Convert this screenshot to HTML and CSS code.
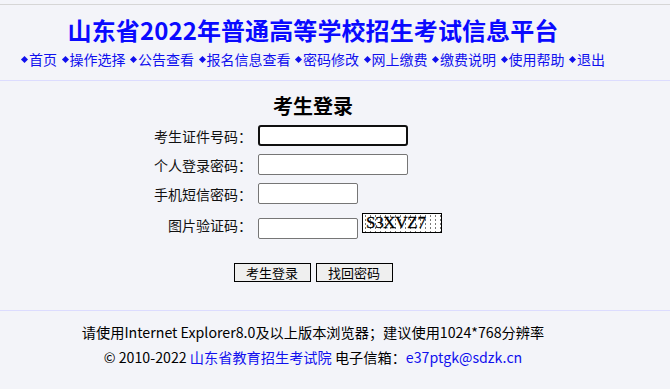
FILE: index.html
```html
<!DOCTYPE html>
<html lang="zh-CN">
<head>
<meta charset="utf-8">
<title>山东省2022年普通高等学校招生考试信息平台</title>
<link rel="stylesheet" href="styles.css">
</head>
<body>
<div class="page">
  <header class="header">
    <h1 class="title">山东省2022年普通高等学校招生考试信息平台</h1>
    <nav class="nav">
      <a href="#"><i class="dot"></i>首页</a>
      <a href="#"><i class="dot"></i>操作选择</a>
      <a href="#"><i class="dot"></i>公告查看</a>
      <a href="#"><i class="dot"></i>报名信息查看</a>
      <a href="#"><i class="dot"></i>密码修改</a>
      <a href="#"><i class="dot"></i>网上缴费</a>
      <a href="#"><i class="dot"></i>缴费说明</a>
      <a href="#"><i class="dot"></i>使用帮助</a>
      <a href="#"><i class="dot"></i>退出</a>
    </nav>
  </header>
  <main class="login">
    <h2 class="login-title">考生登录</h2>
    <div class="form">
      <label class="lbl r1">考生证件号码：</label>
      <div class="field r1"><input class="inp wide focus" type="text"></div>
      <label class="lbl r2">个人登录密码：</label>
      <div class="field r2"><input class="inp wide" type="password"></div>
      <label class="lbl r3">手机短信密码：</label>
      <div class="field r3"><input class="inp narrow" type="password"></div>
      <label class="lbl r4">图片验证码：</label>
      <div class="field r4"><input class="inp narrow" type="text"><span class="captcha">S3XVZ7</span></div>
    </div>
    <div class="buttons">
      <button class="btn" type="button">考生登录</button>
      <button class="btn" type="button">找回密码</button>
    </div>
  </main>
  <footer class="footer">
    <p class="f1">请使用Internet Explorer8.0及以上版本浏览器；建议使用1024*768分辨率</p>
    <p class="f2">© 2010-2022 <a href="#">山东省教育招生考试院</a> 电子信箱：<a href="#">e37ptgk@sdzk.cn</a></p>
  </footer>
</div>
</body>
</html>
```
FILE: styles.css
```css
html, body {
  margin: 0;
  padding: 0;
  background: #f3f4f9;
}
body {
  font-family: "Noto Sans CJK SC", "Noto Sans", sans-serif;
  color: #000;
}
.page {
  padding-top: 4px;
  width: 670px;
}
.header {
  border-top: 1px solid #d6d6d6;
  border-bottom: 1px solid #dcdcff;
  padding: 9px 0 12px;
  width: 670px;
}
.title {
  width: 626px;
  margin: 0;
  text-align: center;
  font-size: 24px;
  line-height: 32px;
  font-weight: bold;
  color: #0a0aff;
  letter-spacing: 0.1px;
}
.nav {
  width: 626px;
  margin-top: 4px;
  display: flex;
  justify-content: center;
  gap: 4.5px;
  font-size: 14px;
  line-height: 18px;
}
.nav a {
  color: #1010ee;
  text-decoration: none;
  display: flex;
  align-items: center;
}
.dot {
  display: inline-block;
  width: 5px;
  height: 5px;
  background: #1010ee;
  transform: rotate(45deg);
  margin: 0 2px 0 1px;
}
.login {
  width: 626px;
  padding-top: 11px;
  height: 229px;
  box-sizing: border-box;
}
.login-title {
  margin: 0;
  text-align: center;
  font-size: 20px;
  line-height: 28px;
  font-weight: bold;
}
.form {
  display: grid;
  grid-template-columns: 252px auto;
  column-gap: 6px;
  grid-template-rows: 29px 29px 29px 33px;
  margin-top: 1px;
}
.lbl {
  font-size: 14px;
  text-align: right;
  display: flex;
  align-items: center;
  justify-content: flex-end;
  color: #111;
}
.field {
  display: flex;
  align-items: center;
}
.inp {
  height: 21px;
  box-sizing: border-box;
  border: 1px solid #767676;
  border-radius: 2px;
  background: #fff;
  padding: 0 3px;
  font-size: 13px;
  margin: 0;
}
.inp.wide { width: 150px; }
.inp.narrow { width: 100px; }
.inp.focus {
  border: 2px solid #101010;
  border-radius: 3px;
}
.r4 .inp { margin-top: 8px; }
.captcha {
  margin-left: 4px;
  width: 80px;
  height: 20px;
  box-sizing: border-box;
  border: 1px solid #000;
  background-color: #fff;
  background-image: radial-gradient(circle, #777 0.5px, transparent 0.8px);
  background-size: 5px 4px;
  font-family: "Liberation Serif", serif;
  font-size: 17px;
  line-height: 18px;
  letter-spacing: -0.3px;
  padding-left: 3px;
  color: #000;
  margin-top: -3px;
  -webkit-text-stroke: 0.3px #000;
}
.buttons {
  display: flex;
  justify-content: center;
  gap: 5px;
  margin-top: 22px;
}
.btn {
  width: 77px;
  height: 19px;
  box-sizing: border-box;
  border: 1px solid #000;
  background: #efefef;
  font-family: "Noto Sans CJK SC", sans-serif;
  font-size: 13px;
  line-height: 17px;
  padding: 0;
  border-radius: 0;
  color: #000;
}
.footer {
  border-top: 1px solid #dcdcff;
  width: 670px;
}
.footer p {
  width: 626px;
  margin: 0;
  text-align: center;
  font-size: 14.2px;
  line-height: 25px;
}
.f1 { padding-top: 9px; }
.footer a {
  color: #1010ee;
  text-decoration: none;
}
```
